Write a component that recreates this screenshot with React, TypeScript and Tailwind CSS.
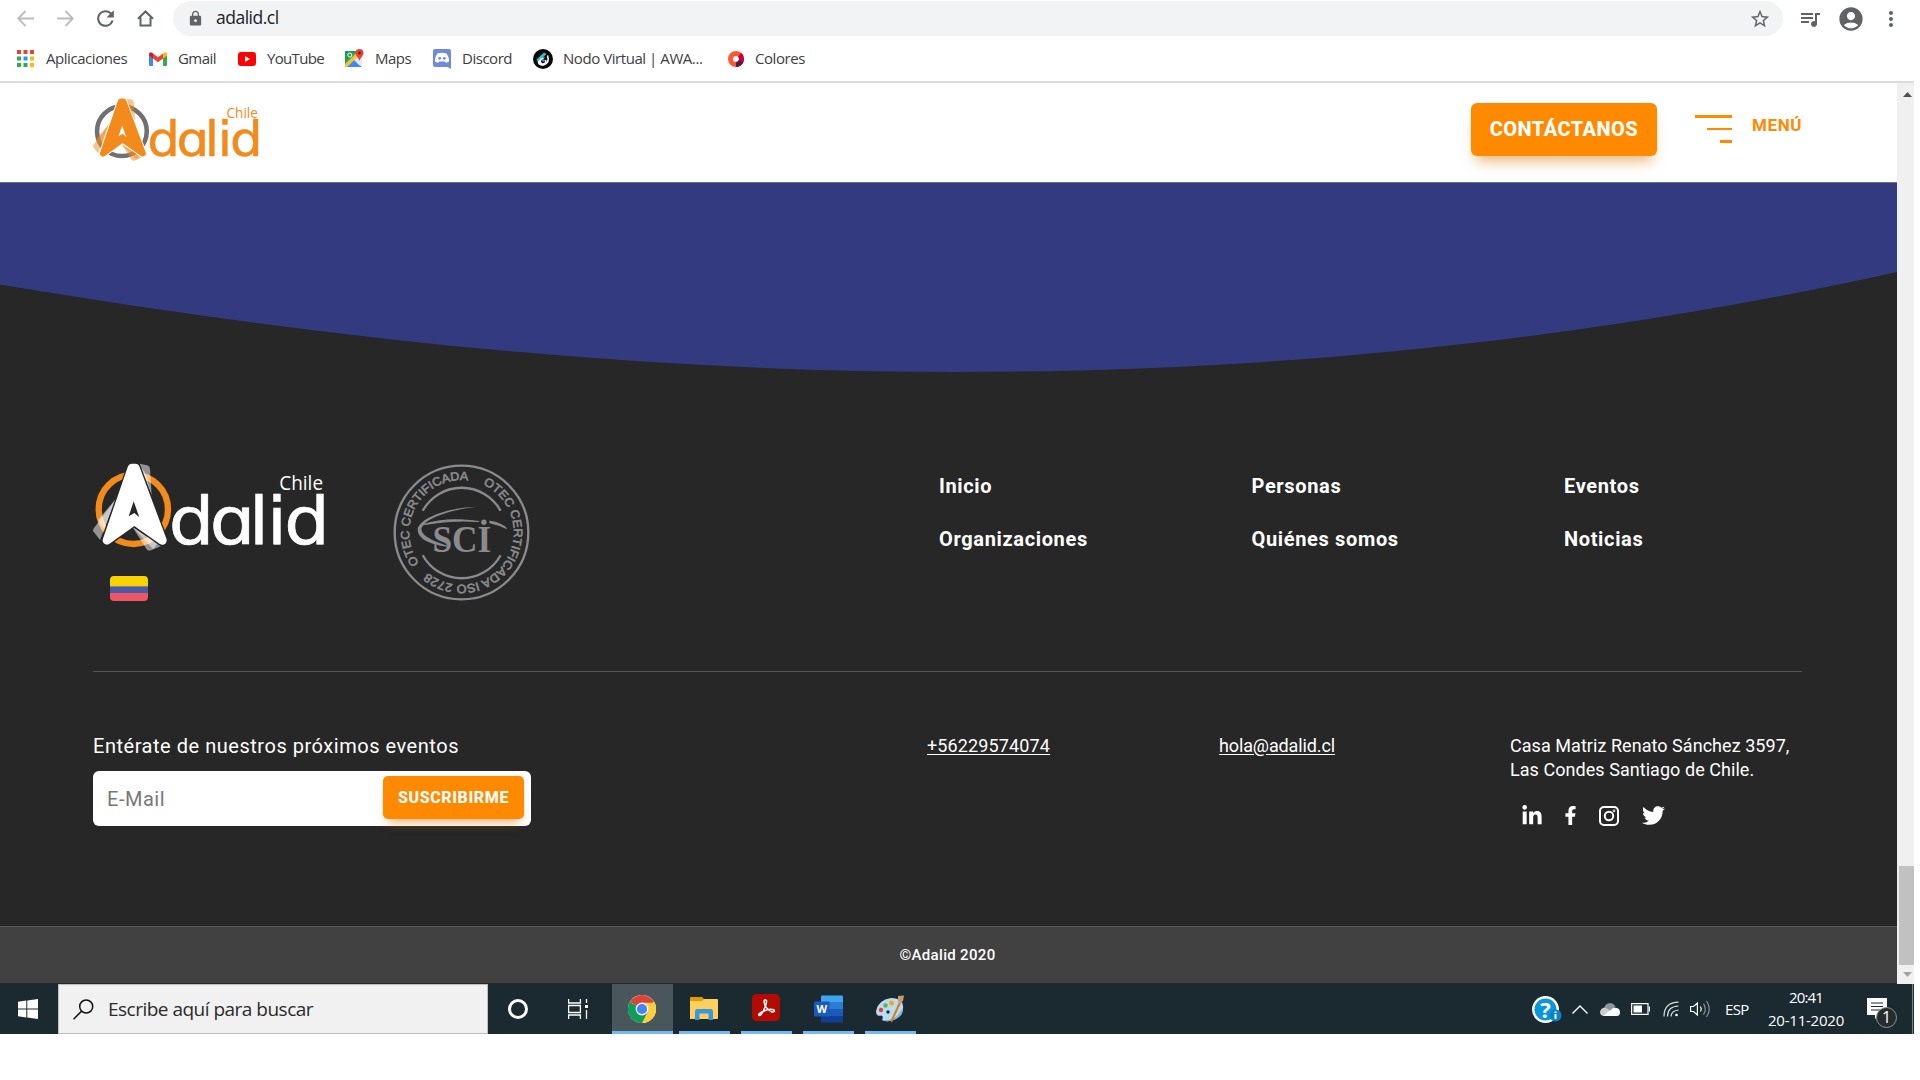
import React from "react";
import { MdStarBorder, MdQueueMusic, MdAccountCircle, MdMoreVert, MdLock, MdRefresh } from "react-icons/md";
import { FaTwitter, FaFacebookF, FaLinkedinIn } from "react-icons/fa";

function AdalidLogo({ className, main, ring, ghost, bg }: { className: string; main: string; ring: string; ghost: string; bg: string }) {
  return (
    <svg className={`overflow-visible ${className}`} viewBox="69 66 699 270" role="img" aria-label="Adalid Chile">
      <circle cx="190" cy="208" r="104" fill="none" stroke={ring} strokeWidth="19" />
      <g fill={ghost} fillOpacity="0.5">
        <path d="M208 71 L232 76 Q240 79 240 88 L245 166 Z" />
        <path d="M212 82 L224 96 L245 166 Z" />
        <path d="M138 176 L72 264 Q66 272 72 277 L90 300 Z" />
        <path d="M138 176 L84 240 L103 268 Z" />
        <path d="M187 260 L230 328 Q235 335 243 331 L272 319 Z" />
        <path d="M187 260 L250 328 L262 311 Z" />
      </g>
      <path d="M186 84H196L277 301L193 242L111 301Z" fill={bg} stroke={bg} strokeWidth="34" strokeLinejoin="round" />
      <path d="M186 84H196L277 301L193 242L111 301Z" fill={main} stroke={main} strokeWidth="26" strokeLinejoin="round" />
      <path d="M191 184L208 232L193 219L176 229Z" fill={bg} />
      <text
        transform="translate(0 312) scale(1.08 1)"
        x="274 388 497 547 595"
        y="0"
        fontSize="199"
        fill={main}
        stroke={main}
        strokeWidth="2"
        className="font-['DejaVu_Sans',sans-serif]"
      >
        dɑlid
      </text>
      <text x="628" y="151" fontSize="58" textLength="131" lengthAdjust="spacingAndGlyphs" fill={main} className="font-['Open_Sans',sans-serif]">
        Chile
      </text>
    </svg>
  );
}

function SciSeal() {
  return (
    <svg className="ml-[67px] h-[137px] w-[137px]" viewBox="968 74 410 410" role="img" aria-label="SCI OTEC Certificada ISO 2728">
      <g fill="none" stroke="#8b8b8f">
        <circle cx="1173" cy="279" r="200" strokeWidth="7" />
        <path d="M1057 214A133 133 0 0 1 1290 214" strokeWidth="7" />
        <path d="M1057 347A133 133 0 0 0 1290 347" strokeWidth="7" />
      </g>
      <path id="seal-a" d="M1046 371A157 157 0 0 1 1195 123.500" fill="none" />
      <path id="seal-b" d="M1237 135.500A157 157 0 1 1 1070 397.500" fill="none" />
      <g fill="#8b8b8f" fontSize="36" stroke="#8b8b8f" strokeWidth="1.800" className="font-['Liberation_Sans',sans-serif]">
        <text>
          <textPath href="#seal-a" textLength="364" lengthAdjust="spacingAndGlyphs">OTEC CERTIFICADA</textPath>
        </text>
        <text>
          <textPath href="#seal-b" textLength="536" lengthAdjust="spacingAndGlyphs">OTEC CERTIFICADA ISO 2728</textPath>
        </text>
      </g>
      <g fill="#8b8b8f">
        <text x="1086" y="338" fontSize="114" textLength="176" lengthAdjust="spacingAndGlyphs" className="font-['Liberation_Serif',serif] font-bold">
          SCI
        </text>
        <circle cx="1240" cy="248" r="10" stroke="#272727" strokeWidth="4" />
        <path d="M1218 202C1130 205 1050 235 1042 268C1040 300 1085 318 1140 322C1090 306 1052 290 1053 268C1060 240 1130 212 1218 202Z" />
        <path d="M1058 256C1110 238 1170 238 1226 246C1170 242 1110 246 1058 256ZM1258 245Q1292 250 1308 267Q1285 256 1258 250Z" stroke="#8b8b8f" strokeWidth="3" />
      </g>
    </svg>
  );
}

const bookmarks = [
  {
    label: "Aplicaciones",
    box: "w-[132px]",
    gap: "w-[29px]",
    track: "tracking-[-0.45px]",
    icon: (
      <svg viewBox="0 0 17 17" className="h-[17px] w-[17px]">
        <path d="M0 0h4v4H0zM6.500 0h4v4h-4zM13 0h4v4h-4z" fill="#ea4335" />
        <path d="M0 6.500h4v4H0zM0 13h4v4H0zM6.500 13h4v4h-4z" fill="#34a853" />
        <path d="M6.500 6.500h4v4h-4z" fill="#2196f3" />
        <path d="M13 6.500h4v4h-4zM13 13h4v4h-4z" fill="#fbbc04" />
      </svg>
    ),
  },
  {
    label: "Gmail",
    box: "w-[89px]",
    gap: "w-[29px]",
    track: "tracking-[-0.54px]",
    icon: (
      <svg viewBox="0 0 18 14" className="h-[14px] w-[18px]">
        <path d="M0 2v10.700Q0 14 1.300 14H4V5z" fill="#4285f4" />
        <path d="M14 5v9h2.700Q18 14 18 12.700V2z" fill="#34a853" />
        <path d="M14 1.500V6.500L18 3.500V2Q17.500-1 14.800.8z" fill="#fbbc04" />
        <path d="M4 1.500V6.500L9 10.200L14 6.500V1.500L9 5.200z" fill="#ea4335" />
        <path d="M0 2V3.500L4 6.500V1.500L3.200.8Q.5-1 0 2z" fill="#c5221f" />
      </svg>
    ),
  },
  {
    label: "YouTube",
    box: "w-[107px]",
    gap: "w-[29px]",
    track: "tracking-[-0.67px]",
    icon: (
      <svg viewBox="0 0 18 14" className="h-[14px] w-[18px]">
        <rect width="18" height="14" rx="3" fill="#f00" />
        <path d="M7 4v6l5-3z" fill="#fff" />
      </svg>
    ),
  },
  {
    label: "Maps",
    box: "w-[88px]",
    gap: "w-[30px]",
    track: "tracking-[-0.54px]",
    icon: (
      <svg viewBox="0 0 19 19" className="h-[19px] w-[19px]">
        <rect y="2" width="17" height="16" rx="1.500" fill="#34a853" />
        <path d="M1 17.500L15.500 3L17 8v9z" fill="#dfe3e8" />
        <path d="M2 18L9 11L16 18z" fill="#4285f4" />
        <path d="M0 15L12 3.500L14 6L1.500 18Q0 18 0 16.500z" fill="#fbc02d" />
        <path d="M0 2h11L0 13z" fill="#1e9e55" />
        <path d="M10 11.500L17 18V11l-4-2z" fill="#e8eaed" />
        <circle cx="4.800" cy="6" r="2" fill="none" stroke="#fff" strokeWidth="1" />
        <path d="M14.500 0a4 4 0 0 1 4 4c0 3-3 4-4 8c-1-4-4-5-4-8a4 4 0 0 1 4-4z" fill="#ea4335" />
        <circle cx="14.500" cy="4" r="1.400" fill="#811" />
      </svg>
    ),
  },
  {
    label: "Discord",
    box: "w-[100px]",
    gap: "w-[29px]",
    track: "tracking-[-0.48px]",
    icon: (
      <svg viewBox="0 0 18 20" className="h-[20px] w-[18px]">
        <path d="M2 0H16Q18 0 18 2V20L14.500 18H2Q0 18 0 16V2Q0 0 2 0z" fill="#7289da" />
        <path d="M4.500 4.500Q9 3 13.500 4.500Q16.500 9 16 12.500Q13.500 14 12.500 13.500L12 12.500H6L5.500 13.500Q4 14 2 12.500Q1.500 9 4.500 4.500z" fill="#fff" />
        <circle cx="6.700" cy="9.300" r="1.400" fill="#7289da" />
        <circle cx="11.300" cy="9.300" r="1.400" fill="#7289da" />
      </svg>
    ),
  },
  {
    label: "Nodo Virtual | AWA...",
    box: "w-[195px]",
    gap: "w-[30px]",
    track: "tracking-[-0.44px]",
    icon: (
      <svg viewBox="0 0 20 20" className="h-[20px] w-[20px]">
        <circle cx="10" cy="10" r="10" fill="#080808" />
        <path d="M3.500 10.500L11 3.500L13.500 5L5 13z" fill="#22c7c9" />
        <path d="M14.500 6.500Q17 14 10.500 16Q6 16.500 5.500 13L9.500 9.500A2.800 2.800 0 1 0 12.500 11" fill="none" stroke="#fff" strokeWidth="1.600" />
        <circle cx="10.500" cy="11.500" r="1.300" fill="#5b8cff" />
      </svg>
    ),
  },
  {
    label: "Colores",
    box: "w-[90px]",
    gap: "w-[27px]",
    track: "tracking-[-0.43px]",
    icon: (
      <svg viewBox="0 0 16 16" className="h-[16px] w-[16px]">
        <circle cx="8" cy="8" r="5.500" fill="none" stroke="#ff5733" strokeWidth="5" />
        <path d="M11.500 3.800A5.500 5.500 0 0 1 12.300 11.500" fill="none" stroke="#c70039" strokeWidth="5" />
        <path d="M13 10.200A5.500 5.500 0 0 1 8 13.500" fill="none" stroke="#571845" strokeWidth="5" />
      </svg>
    ),
  },
];

function BrowserChrome() {
  return (
    <div className="h-[83px] w-[1914px] border-b-2 border-[#dadce0] font-['Open_Sans',sans-serif]">
      <div className="flex h-[37px] items-center pl-[5px] text-[#5f6368]">
        <div className="flex w-10 justify-center">
          <svg viewBox="0 0 17 17" className="h-[17px] w-[17px]" fill="none" stroke="#babcbe" strokeWidth="1.800">
            <path d="M17 8.500H1.500M8.500 1L1.200 8.500L8.500 16" />
          </svg>
        </div>
        <div className="flex w-10 justify-center">
          <svg viewBox="0 0 17 17" className="h-[17px] w-[17px]" fill="none" stroke="#babcbe" strokeWidth="1.800">
            <path d="M0 8.500H15.500M8.500 1L15.800 8.500L8.500 16" />
          </svg>
        </div>
        <div className="flex w-10 justify-center">
          <MdRefresh className="h-[25px] w-[25px]" />
        </div>
        <div className="flex w-10 justify-center">
          <svg viewBox="0 0 17 17" className="h-[17px] w-[17px]" fill="none" stroke="#5f6368" strokeWidth="2">
            <path d="M1 8.800L8.500 1.500L16 8.800M3.500 7.500V15.500H13.500V7.500" />
          </svg>
        </div>
        <div className="ml-2 flex h-[35px] w-[1610px] items-center rounded-full bg-[#f1f3f4]">
          <MdLock className="ml-[14px] h-[17px] w-[17px]" />
          <span className="ml-[12px] pb-px text-[17.500px] leading-none tracking-[-0.5px] text-[#202124]">adalid.cl</span>
          <MdStarBorder className="mr-[12px] ml-auto h-[22px] w-[22px]" />
        </div>
        <MdQueueMusic className="ml-[15px] h-[24px] w-[24px]" />
        <MdAccountCircle className="ml-[15px] h-[28px] w-[28px]" />
        <MdMoreVert className="ml-[14px] h-[24px] w-[24px]" />
      </div>
      <div className="flex h-[43px] items-center pl-[17px] text-[15px] text-[#3c4043]">
        {bookmarks.map((b) => (
          <div key={b.label} className={`flex items-center ${b.box}`}>
            <div className={`flex shrink-0 ${b.gap}`}>{b.icon}</div>
            <span className={`pb-px whitespace-nowrap ${b.track}`}>{b.label}</span>
          </div>
        ))}
      </div>
    </div>
  );
}

function Navbar() {
  return (
    <header className="flex h-[99px] w-full bg-white pl-[93px] text-[#ff8a00]">
      <AdalidLogo className="mt-[14px] h-[65px] w-[167px]" main="#f28a1c" ring="#707070" ghost="#f28a1c" bg="#ffffff" />
      <div className="mt-[20px] ml-[1211px] flex h-[53px] w-[186px] items-center justify-center rounded-md bg-[#ff8a00] pb-px text-[20px] font-extrabold tracking-[0.45px] text-white shadow-[0_10px_14px_-5px_rgba(225,120,10,0.55)]">
        CONTÁCTANOS
      </div>
      <div className="mt-[32px] ml-[38px] flex w-[37px] flex-col items-end">
        <div className="h-[3px] w-[37px] bg-[#ff8a00]" />
        <div className="mt-[10px] h-[2px] w-[25px] bg-[#ff8a00]" />
        <div className="mt-[10px] h-[3px] w-[12px] bg-[#ff8a00]" />
      </div>
      <div className="mt-[30px] ml-[20px] text-[17px] leading-6 font-bold tracking-[0.59px]">MENÚ</div>
    </header>
  );
}

function Hero() {
  return (
    <svg className="block h-[191px] w-[1897px]" viewBox="0 182 1897 191">
      <path d="M0 182H1897V272C1597 338 1290 372 955 372C620 372 300 334.500 0 284.500Z" fill="#333a7f" />
      <path d="M0 182.500H1897" stroke="#6a6f95" />
    </svg>
  );
}

const links = [
  ["Inicio", "Organizaciones"],
  ["Personas", "Quiénes somos"],
  ["Eventos", "Noticias"],
];

function Footer() {
  return (
    <footer className="w-full text-white">
      <div className="ml-[93px] h-[299px] w-[1709px] border-b border-[#555555]">
        <div className="flex pt-[89px]">
          <div className="w-[233px]">
            <AdalidLogo className="h-[90px] w-[233px]" main="#ffffff" ring="#f28a1c" ghost="#ffffff" bg="#272727" />
            <div className="mt-[24px] ml-[17px] h-[25px] w-[38px] overflow-hidden rounded">
              <div className="h-[10px] bg-[#f8d300]" />
              <div className="h-[7px] border-t border-[#8a8470] bg-[#4a5aa8]" />
              <div className="h-[8px] bg-[#ee5565]" />
            </div>
          </div>
          <div className="mt-[2px]">
            <SciSeal />
          </div>
          <div className="mt-[11px] ml-[409px] flex text-[20px] leading-[26px] font-bold tracking-[0.65px]">
            {links.map((col) => (
              <div key={col[0]} className="flex w-[312.500px] flex-col gap-[27px]">
                {col.map((l) => (
                  <a key={l}>{l}</a>
                ))}
              </div>
            ))}
          </div>
        </div>
      </div>
      <div className="flex h-[254px] pt-[62px] pl-[93px]">
        <div className="w-[834px]">
          <div className="text-[20px] leading-6 tracking-[0.53px]">Entérate de nuestros próximos eventos</div>
          <div className="mt-[13px] flex h-[55px] w-[438px] items-start justify-between rounded-md bg-white pt-[5px] pr-[7px] pl-[14px]">
            <span className="text-[20px] leading-[46px] tracking-[0.51px] text-[#777777]">E-Mail</span>
            <div className="flex h-[43px] w-[141px] items-center justify-center rounded-[5px] bg-[#ff8a00] text-[16px] font-extrabold tracking-[0.6px] text-white shadow-[0_8px_10px_-5px_rgba(225,120,10,0.6)]">
              SUSCRIBIRME
            </div>
          </div>
        </div>
        <div className="w-[292px] text-[18px] leading-6 tracking-[0.13px]">
          <a className="underline underline-offset-2">+56229574074</a>
        </div>
        <div className="w-[291px] text-[18px] leading-6 tracking-[-0.12px]">
          <a className="underline underline-offset-2">hola@adalid.cl</a>
        </div>
        <div className="text-[18px] leading-6 tracking-[0.05px]">
          <div>Casa Matriz Renato Sánchez 3597,</div>
          <div>Las Condes Santiago de Chile.</div>
          <div className="mt-[22px] flex items-center pl-[11px]">
            <FaLinkedinIn className="h-[22px] w-[22px]" />
            <FaFacebookF className="ml-[18px] h-[19px] w-[19px]" />
            <svg viewBox="0 0 20 20" className="ml-[19px] h-[20px] w-[20px]" fill="none" stroke="#fff" strokeWidth="2">
              <rect x="1" y="1" width="18" height="18" rx="4" />
              <circle cx="10" cy="10" r="4.200" />
              <circle cx="15" cy="4.800" r=".4" />
            </svg>
            <FaTwitter className="ml-[23px] h-[23px] w-[23px]" />
          </div>
        </div>
      </div>
      <div className="h-[57px] border-t border-[#5a5a5a] bg-[#414141] pr-[2px] text-center text-[15px] leading-[57px] font-medium tracking-[0.32px]">
        ©Adalid 2020
      </div>
    </footer>
  );
}

function Scrollbar() {
  return (
    <div className="flex h-[901px] w-[17px] flex-col bg-[#f0f0f0]">
      <svg className="h-[17px] w-[17px]" viewBox="0 0 17 17">
        <path d="M6 14L10.500 9L15 14Z" fill="#505050" />
      </svg>
      <div className="mt-[766px] ml-[2px] h-[99px] bg-[#c1c1c1]" />
      <svg className="h-[19px] w-[17px]" viewBox="0 0 17 19">
        <path d="M6 7L10.500 12L15 7Z" fill="#a3a3a3" />
      </svg>
    </div>
  );
}

const pinned = [
  <svg key="explorer" viewBox="0 0 28 24" className="mt-[3px] h-[24px] w-[28px]">
    <path d="M0 1Q0 0 1 0H12L14 2V6H0z" fill="#e09b00" />
    <path d="M0 4H12L14 2H27Q28 2 28 3V21Q28 22 27 22H0z" fill="#ffd15c" />
    <path d="M5 23V14Q5 12 7 12H21Q23 12 23 14V23H18.500V16.500H9.500V23z" fill="#3a96dd" />
  </svg>,
  <svg key="acrobat" viewBox="0 0 28 28" className="h-[28px] w-[28px]">
    <rect width="28" height="27" rx="4.500" fill="#b30b00" />
    <path d="M13.500 6C11.500 5 11.500 9 14 13Q16 16.500 20 18Q23.500 18 22 16Q18 14 11 17.500Q5.500 20 7 21.500Q9 22 11.500 16.500Q15 9.500 14.500 6.500Z" fill="none" stroke="#fff" strokeWidth="1.500" />
  </svg>,
  <svg key="word" viewBox="0 0 29 28" className="mt-[2px] h-[28px] w-[29px]">
    <path d="M7 1.500Q7 .5 8 .5H28Q29 .5 29 1.500V7H7z" fill="#41a5ee" />
    <path d="M7 7h22v7H7z" fill="#2b7cd3" />
    <path d="M7 14h22v7H7z" fill="#185abd" />
    <path d="M7 21h22v5.500q0 1-1 1H8q-1 0-1-1z" fill="#103f91" />
    <rect y="6.500" width="15.500" height="15" rx="1.200" fill="#185abd" />
    <text x="7.700" y="18" textAnchor="middle" fontSize="11" fontWeight="700" fill="#fff" className="font-['Open_Sans',sans-serif]">W</text>
  </svg>,
  <svg key="paint" viewBox="0 0 29 28" className="mt-[2px] h-[28px] w-[29px]">
    <path d="M15 3Q26 3 27 11Q28 20 20 24Q12 28 6 25Q8 21 5 20.500Q0 22 0 16Q2 5 15 3z" fill="#b9dcf0" />
    <path d="M27 13Q27 20 20 24Q12 28 6 25Q16 26 22 20Z" fill="#7fb2d3" />
    <circle cx="5" cy="15" r="2.200" fill="#e0443c" />
    <circle cx="9.500" cy="10.500" r="2.200" fill="#5fb548" />
    <circle cx="15.500" cy="8" r="2.500" fill="#f5a81c" />
    <circle cx="12" cy="17" r="1.700" fill="#1b2a30" />
    <path d="M23 7L14.500 26L16 27.500L25 8z" fill="#e07b1a" />
    <path d="M22 1L28 0.500L27 6L24 8L22 6z" fill="#c69a6b" />
  </svg>,
];

function Taskbar() {
  return (
    <div className="flex h-[50px] w-[1914px] bg-[#1b2a30] font-['Open_Sans',sans-serif] text-[15px] text-white">
      <div className="flex w-[58px] items-center pl-[18px]">
        <svg viewBox="0 0 20 20" className="h-[20px] w-[20px]" fill="#fff">
          <path d="M0 2.700L8.300 1.500V9.400H0zM9.300 1.400L20 0V9.400H9.300zM0 10.400H8.300V18.500L0 17.300zM9.300 10.400H20V20L9.300 18.600z" />
        </svg>
      </div>
      <div className="flex w-[430px] items-center border border-[#bdbdbd] bg-[#f1f1f1]">
        <svg viewBox="0 0 21 21" className="ml-[14px] h-[21px] w-[21px]" fill="none" stroke="#111" strokeWidth="1.500">
          <circle cx="13.200" cy="7.500" r="6.500" />
          <path d="M8.500 12.200L.5 20.300" />
        </svg>
        <span className="ml-[14px] text-[19px] tracking-[-0.51px] text-[#2b2b2b]">Escribe aquí para buscar</span>
      </div>
      <div className="flex w-[60px] items-center justify-center">
        <div className="h-[20px] w-[20px] rounded-full border-[3px] border-white" />
      </div>
      <div className="flex w-[64px] items-center pl-[20px]">
        <svg viewBox="0 0 20 20" className="h-[20px] w-[20px]" fill="none" stroke="#fff" strokeWidth="1.300">
          <path d="M.6 0V4H12.400V0M.6 20V16H12.400V20M.6 6.500H12.400V13.500H.6zM18.500 0V4M18.500 11V20" />
          <path d="M17 6h3v3h-3z" fill="#fff" stroke="none" />
        </svg>
      </div>
      <div className="flex w-[61px] items-center border-b-[3px] border-[#76b9ed] bg-[#49575c] pl-[16px]">
        <svg viewBox="0 0 28 28" className="mt-[3px] h-[28px] w-[28px]">
          <circle cx="14" cy="14" r="14" fill="#fff" />
          <path d="M14 14L1.900 7A14 14 0 0 1 26.100 7z" fill="#db4437" />
          <path d="M14 14L26.100 7A14 14 0 0 1 14 28z" fill="#ffcd40" />
          <path d="M14 14L14 28A14 14 0 0 1 1.900 7z" fill="#0f9d58" />
          <path d="M14 7.700H26.500A14 14 0 0 1 14 28L19.500 17.200z" fill="#ffcd40" />
          <path d="M1.900 7L8.500 17.200L14 20.300L19.500 17.200L14 28A14 14 0 0 1 1.900 7z" fill="#0f9d58" />
          <circle cx="14" cy="14" r="6.400" fill="#f1f1f1" />
          <circle cx="14" cy="14" r="5.100" fill="#4285f4" />
        </svg>
      </div>
      <div className="ml-[6px] flex gap-[11px]">
        {pinned.map((icon, i) => (
          <div key={i} className="flex w-[51px] items-center border-b-[3px] border-[#76b9ed] pl-[11px]">
            {icon}
          </div>
        ))}
      </div>
      <div className="ml-auto flex items-center">
        <svg viewBox="0 0 30 28" className="h-[28px] w-[30px]">
          <circle cx="13.500" cy="14.500" r="13.500" fill="#fff" />
          <circle cx="13.500" cy="14.500" r="11" fill="#0a97d9" />
          <text x="13.500" y="22.500" textAnchor="middle" fontSize="22" fontWeight="700" fill="#fff" className="font-['Open_Sans',sans-serif]">?</text>
          <circle cx="23.500" cy="20.500" r="6" fill="#0a84c6" />
          <path d="M22.500 19h2v5h-2zM22.500 16.500h2v1.500h-2z" fill="#fff" />
        </svg>
        <svg viewBox="0 0 16 9" className="ml-[10px] h-[9px] w-[16px]" fill="none" stroke="#fff" strokeWidth="1.400">
          <path d="M.5 8.500L8 1L15.500 8.500" />
        </svg>
        <svg viewBox="0 0 20 13" className="ml-[12px] h-[13px] w-[20px]">
          <path d="M4 6Q5 0 10.500 0Q14 .5 15.500 4L9 8z" fill="#8e979b" />
          <path d="M3.500 13Q0 12.500 0 9Q.5 5 5 4.500L11 8L6 13z" fill="#c9cdcf" />
          <path d="M3 13L13 5Q19.500 4 20 9Q20 13 17 13z" fill="#fff" />
        </svg>
        <svg viewBox="0 0 19 12" className="ml-[11px] h-[12px] w-[19px]" fill="none" stroke="#fff" strokeWidth="1.200">
          <path d="M.6 .6H17V11.400H.6z" />
          <path d="M18.400 3.500v5" />
          <path d="M2.500 2.500H11V9.500H2.500z" fill="#fff" stroke="none" />
        </svg>
        <svg viewBox="0 0 16 16" className="ml-[13px] h-[16px] w-[16px]" fill="none" stroke="#fff" strokeWidth="1.200">
          <path d="M1 15.500Q1 1.500 15.500 1.200M4.500 15.500Q4.500 5.500 15.500 5M8 15.500Q8.500 9.500 15.500 9" strokeOpacity=".85" />
          <circle cx="13.500" cy="14" r="1.300" fill="#fff" stroke="none" />
        </svg>
        <svg viewBox="0 0 21 18" className="ml-[11px] h-[18px] w-[21px]" fill="none" stroke="#fff" strokeWidth="1.200">
          <path d="M.6 6.500H3.500L7.400 3V15L3.500 11.500H.6zM10.500 6.500Q12 9 10.500 11.500" />
          <path d="M13.500 3.500Q17 9 13.500 14.500M16.500 1Q22 9 16.500 17" strokeOpacity=".5" />
        </svg>
        <span className="ml-[14px] w-[24px] tracking-[-0.7px]">ESP</span>
        <div className="ml-[18px] flex w-[78px] flex-col items-center leading-[23px]">
          <span className="tracking-[-0.85px]">20:41</span>
          <span className="tracking-[-0.23px]">20-11-2020</span>
        </div>
        <svg viewBox="0 0 30 32" className="mt-[7px] ml-[22px] h-[32px] w-[30px]">
          <path d="M0 1H20V18H12L8 22V18H0z" fill="#fff" />
          <path d="M4 6h12M4 9.500h12M4 13h12" stroke="#1b2a30" strokeWidth="1.200" />
          <circle cx="19.500" cy="20.500" r="10" fill="#262b2e" stroke="#8d9496" />
          <text x="19.500" y="26" textAnchor="middle" fontSize="16" fill="#fff" className="font-['Open_Sans',sans-serif]">1</text>
        </svg>
        <div className="ml-[15px] h-[50px] w-px bg-[#7c8589]" />
        <div className="w-px" />
      </div>
    </div>
  );
}

export default function App() {
  return (
    <div className="h-[1080px] w-[1920px] overflow-hidden bg-white">
      <BrowserChrome />
      <div className="flex h-[901px] w-[1914px]">
        <div className="flex w-[1897px] flex-col border-b border-[#272727] bg-[#272727] font-['Roboto',sans-serif]">
          <Navbar />
          <Hero />
          <Footer />
        </div>
        <Scrollbar />
      </div>
      <Taskbar />
    </div>
  );
}
